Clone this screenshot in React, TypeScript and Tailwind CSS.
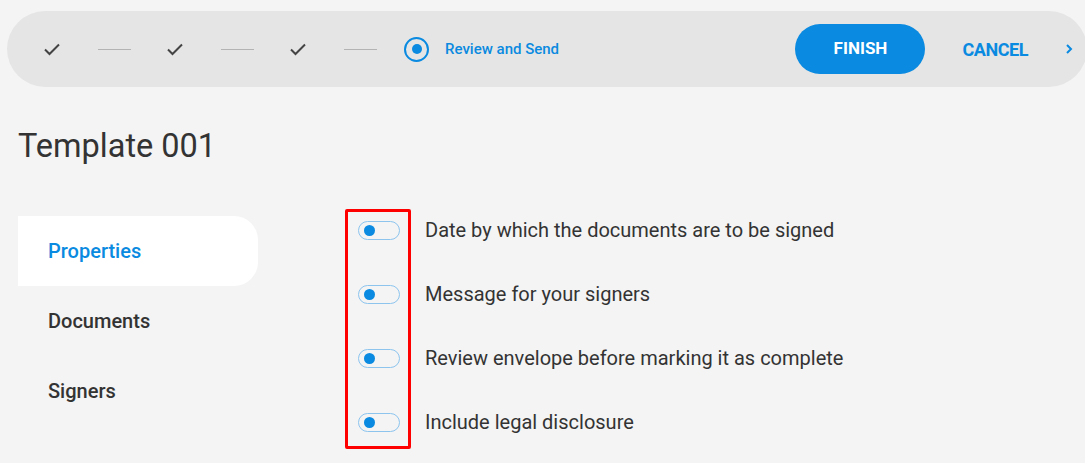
import React from 'react';

const OPTIONS = [
  'Date by which the documents are to be signed',
  'Message for your signers',
  'Review envelope before marking it as complete',
  'Include legal disclosure',
];

const NAV = ['Properties', 'Documents', 'Signers'];

const Check = () => (
  <svg width="20" height="14" viewBox="0 0 20 14" fill="none">
    <path d="M3 7.5 L7.5 12 L17 2.5" stroke="#444" strokeWidth="2" />
  </svg>
);

const Toggle = () => (
  <div className="w-[42px] h-[19px] rounded-full border border-[#8cc4ee] flex items-center pl-[5px]">
    <div className="w-[11px] h-[11px] rounded-full bg-[#0a8ae0]" />
  </div>
);

export default function App() {
  return (
    <div
      className="h-[463px] w-[1085px] overflow-hidden bg-[#f4f4f4] text-[#333]"
      style={{ fontFamily: 'Roboto, "Liberation Sans", sans-serif' }}
    >
      {/* stepper bar */}
      <div className="mt-[11px] ml-[7px] w-[1080px] h-[76px] rounded-full bg-[#e5e5e5] flex items-center">
        <div className="ml-[35px] w-[20px] flex justify-center"><Check /></div>
        <div className="ml-[36px] w-[33px] h-px bg-[#b3b3b3]" />
        <div className="ml-[34px] w-[20px] flex justify-center"><Check /></div>
        <div className="ml-[36px] w-[33px] h-px bg-[#b3b3b3]" />
        <div className="ml-[34px] w-[20px] flex justify-center"><Check /></div>
        <div className="ml-[36px] w-[33px] h-px bg-[#b3b3b3]" />
        <div className="ml-[27px] w-[25px] h-[25px] rounded-full border-2 border-[#0a8ae0] flex items-center justify-center">
          <div className="w-[10px] h-[10px] rounded-full bg-[#0a8ae0]" />
        </div>
        <span className="ml-[16px] text-[15px] font-medium text-[#0a8ae0]">Review and Send</span>

        <button className="ml-auto w-[130px] h-[50px] rounded-full bg-[#0a8ae0] text-white text-[17px] font-bold">
          FINISH
        </button>
        <span className="ml-[37px] text-[18px] font-bold text-[#0a8ae0] tracking-tight">CANCEL</span>
        <svg className="ml-[37px] mr-[14px]" width="8" height="12" viewBox="0 0 8 12" fill="none">
          <path d="M2 2 L6 6 L2 10" stroke="#0a8ae0" strokeWidth="2" />
        </svg>
      </div>

      <h1 className="ml-[18px] mt-[39px] text-[32.5px] leading-[40px] font-normal text-[#333]">Template 001</h1>

      <div className="mt-[32px] flex items-start">
        <div className="ml-[18px] mt-[18px] w-[240px]">
          {NAV.map((item, i) => (
            <div
              key={item}
              className={`h-[70px] pl-[30px] flex items-center text-[20px] font-medium ${
                i === 0 ? 'bg-white rounded-r-[24px] text-[#0a8ae0]' : 'text-[#333]'
              }`}
            >
              {item}
            </div>
          ))}
        </div>

        <div className="relative ml-[100px]">
          {OPTIONS.map((label) => (
            <div key={label} className="h-[64px] flex items-center">
              <Toggle />
              <span className="ml-[25px] text-[20px] text-[#333]">{label}</span>
            </div>
          ))}
          <div className="absolute left-[-13px] top-[11px] w-[66px] h-[240px] border-[3px] border-[#ff0000] rounded-[2px]" />
        </div>
      </div>
    </div>
  );
}
